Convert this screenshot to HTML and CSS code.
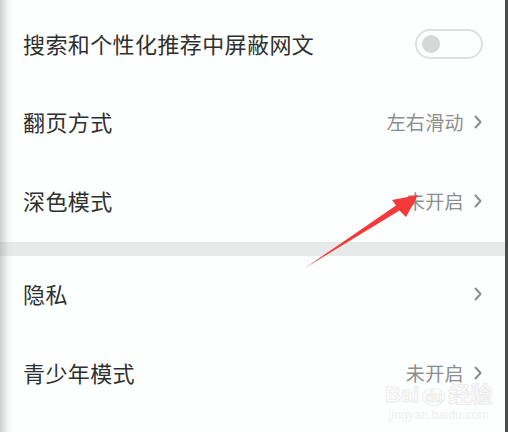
FILE: index.html
```html
<!DOCTYPE html>
<html lang="zh-CN">
<head>
<meta charset="utf-8">
<link rel="stylesheet" href="styles.css">
</head>
<body>
<div class="screen">
  <div class="list">
    <div class="row first">
      <span class="title">搜索和个性化推荐中屏蔽网文</span>
      <span class="toggle"><span class="knob"></span></span>
    </div>
    <div class="row">
      <span class="title">翻页方式</span>
      <span class="right"><span class="value">左右滑动</span><svg class="chev" viewBox="0 0 8 14" width="8" height="14"><path d="M1.5 1.5 L6.5 7 L1.5 12.5" fill="none" stroke="#8a8e90" stroke-width="2" stroke-linecap="round" stroke-linejoin="round"/></svg></span>
    </div>
    <div class="row">
      <span class="title">深色模式</span>
      <span class="right"><span class="value">未开启</span><svg class="chev" viewBox="0 0 8 14" width="8" height="14"><path d="M1.5 1.5 L6.5 7 L1.5 12.5" fill="none" stroke="#8a8e90" stroke-width="2" stroke-linecap="round" stroke-linejoin="round"/></svg></span>
    </div>
  </div>
  <div class="band"></div>
  <div class="list">
    <div class="row">
      <span class="title">隐私</span>
      <span class="right"><svg class="chev" viewBox="0 0 8 14" width="8" height="14"><path d="M1.5 1.5 L6.5 7 L1.5 12.5" fill="none" stroke="#8a8e90" stroke-width="2" stroke-linecap="round" stroke-linejoin="round"/></svg></span>
    </div>
    <div class="row">
      <span class="title">青少年模式</span>
      <span class="right"><span class="value">未开启</span><svg class="chev" viewBox="0 0 8 14" width="8" height="14"><path d="M1.5 1.5 L6.5 7 L1.5 12.5" fill="none" stroke="#8a8e90" stroke-width="2" stroke-linecap="round" stroke-linejoin="round"/></svg></span>
    </div>
  </div>
  <div class="shadow-left"></div>
  <svg class="arrow" viewBox="0 0 508 432" width="508" height="432">
    <polygon points="305,268 396,205.5 392,200 418,195 406,217 399.5,210.5" fill="#f4393a"/>
  </svg>
  <div class="watermark">
    <div class="wm-logo">Bai<span class="wm-du">du</span>经验</div>
    <div class="wm-url">jingyan.baidu.com</div>
  </div>
</div>
<div class="edge"></div>
</body>
</html>
```
FILE: styles.css
```css
html, body {
  margin: 0;
  padding: 0;
  background: #ffffff;
}
body {
  display: flex;
  width: 508px;
  height: 432px;
  overflow: hidden;
  font-family: "Noto Sans CJK SC", "Noto Sans", sans-serif;
}
.screen {
  position: relative;
  width: 505px;
  height: 432px;
  padding-top: 5px;
  box-sizing: border-box;
  background: #fdfefe;
}
.edge {
  width: 3px;
  height: 432px;
  background: #4a4c4c;
}
.list {
  display: flex;
  flex-direction: column;
}
.row {
  height: 79px;
  box-sizing: border-box;
  display: flex;
  align-items: center;
  justify-content: space-between;
  padding: 0 23px 5px 23px;
}
.row.first {
  padding-bottom: 3px;
}
.title {
  font-size: 22px;
  color: #2e3030;
  letter-spacing: 0.4px;
  line-height: 1;
}
.right {
  display: flex;
  align-items: center;
  gap: 10px;
}
.value {
  font-size: 19px;
  color: #8a8e90;
  line-height: 1;
  letter-spacing: 0.4px;
}
.chev {
  display: block;
  margin-top: 2px;
}
.toggle {
  width: 59px;
  height: 26px;
  border: 2px solid #dfe0e0;
  border-radius: 16px;
  display: flex;
  align-items: center;
  padding-left: 5px;
  box-sizing: content-box;
  margin-right: -1px;
  margin-bottom: -1px;
}
.knob {
  width: 18px;
  height: 18px;
  border-radius: 50%;
  background: #d6d7d7;
}
.band {
  height: 14px;
  background: #e8eaea;
}
.shadow-left {
  position: absolute;
  left: 0;
  top: 0;
  width: 14px;
  height: 432px;
  background: linear-gradient(to right, rgba(150,150,150,0.45), rgba(200,200,200,0.15) 60%, rgba(255,255,255,0));
}
.arrow {
  position: absolute;
  left: 0;
  top: 0;
}
.watermark {
  position: absolute;
  left: 385px;
  top: 382px;
  display: flex;
  flex-direction: column;
  align-items: center;
  font-family: "Liberation Sans", Arial, sans-serif;
}
.wm-logo {
  font-size: 22px;
  font-weight: bold;
  line-height: 26px;
  color: #fdfdfd;
  -webkit-text-stroke: 1px #ececec;
  font-family: "Liberation Sans", "Noto Sans CJK SC", sans-serif;
}
.wm-du {
  display: inline-block;
  font-size: 14px;
  border: 1px solid #ececec;
  border-radius: 50%;
  padding: 0 2px;
  line-height: 16px;
  margin: 0 3px;
}
.wm-url {
  font-size: 12px;
  line-height: 14px;
  color: #f1f1f1;
  letter-spacing: 0.2px;
}
```
